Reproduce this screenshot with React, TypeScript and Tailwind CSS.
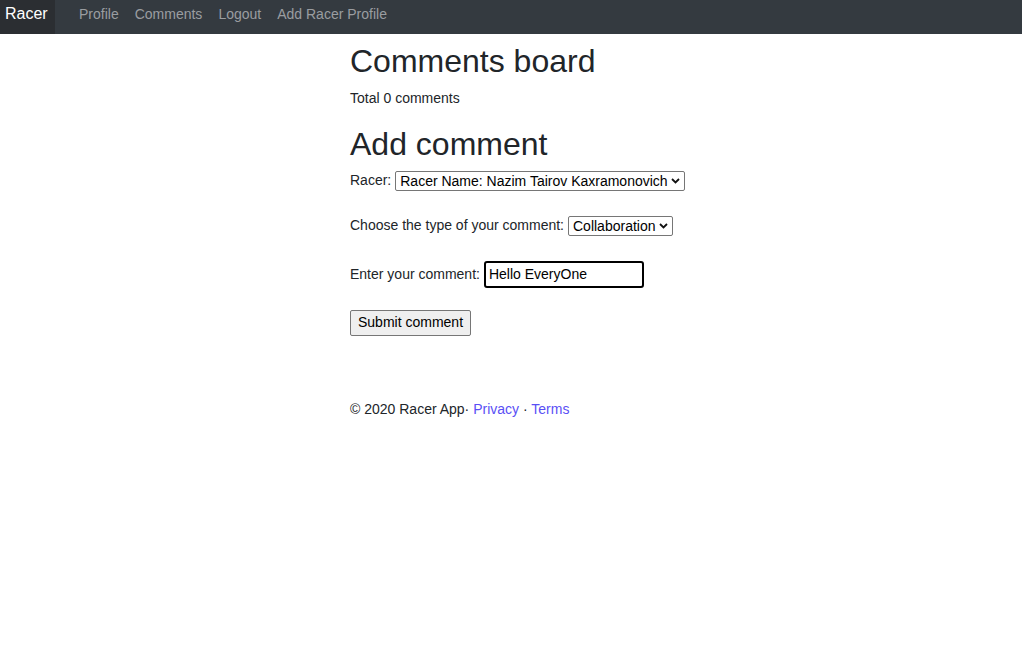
import { useState } from 'react';

const navLinks = ['Profile', 'Comments', 'Logout', 'Add Racer Profile'];

const Chevron = () => (
  <svg width="9" height="6" viewBox="0 0 9 6" className="ml-[3px] shrink-0">
    <path d="M1 1l3.5 3.5L8 1" fill="none" stroke="#111" strokeWidth="1.8" />
  </svg>
);

const FakeSelect = ({ value }: { value: string }) => (
  <div className="flex h-[20px] items-center rounded-[2px] border border-[#767676] bg-white pl-[4px] pr-[4px] text-[14px] leading-none text-black">
    <span>{value}</span>
    <Chevron />
  </div>
);

export default function App() {
  const [comment, setComment] = useState('Hello EveryOne');

  return (
    <div className="min-h-[665px] bg-white font-['Liberation_Sans',Arial,sans-serif] text-[14px] text-[#212529]">
      <nav className="flex h-[34px] items-stretch bg-[#343a40]">
        <div className="w-[55px] bg-[#2b2e32] pl-[5px] pt-[4px] text-[16px] leading-[20px] text-white">
          Racer
        </div>
        <ul className="ml-[16px] flex pt-[4px]">
          {navLinks.map((link) => (
            <li key={link} className="px-[8px] text-[14px] leading-[20px] text-[#9a9da0]">
              {link}
            </li>
          ))}
        </ul>
      </nav>

      <main className="mx-auto w-[322px] pt-[8px]">
        <h1 className="text-[32px] leading-[1.2] font-normal">Comments board</h1>
        <p className="mt-[8px] leading-[21px]">Total 0 comments</p>

        <h1 className="mt-[16px] text-[32px] leading-[1.2] font-normal">Add comment</h1>

        <form className="mt-[6px] flex flex-col whitespace-nowrap">
          <div className="flex h-[22px] items-center gap-[4px]">
            <span>Racer:</span>
            <FakeSelect value="Racer Name: Nazim Tairov Kaxramonovich" />
          </div>
          <div className="mt-[23px] flex h-[22px] items-center gap-[4px]">
            <span>Choose the type of your comment:</span>
            <FakeSelect value="Collaboration" />
          </div>
          <div className="mt-[24px] flex h-[27px] items-center gap-[4px]">
            <span>Enter your comment:</span>
            <input
              autoFocus
              value={comment}
              onChange={(e) => setComment(e.target.value)}
              className="h-[27px] w-[160px] rounded-[3px] border-2 border-black px-[3px] text-[14px] text-black outline-none"
            />
          </div>
          <div className="mt-[22px]">
            <button
              type="button"
              className="h-[26px] rounded-[2px] border border-[#767676] bg-[#efefef] px-[7px] text-[14px] text-black"
            >
              Submit comment
            </button>
          </div>
        </form>

        <footer className="mt-[63px] leading-[21px]">
          © 2020 Racer App· <a className="text-[#5a4ff5]">Privacy</a> ·{' '}
          <a className="text-[#5a4ff5]">Terms</a>
        </footer>
      </main>
    </div>
  );
}
